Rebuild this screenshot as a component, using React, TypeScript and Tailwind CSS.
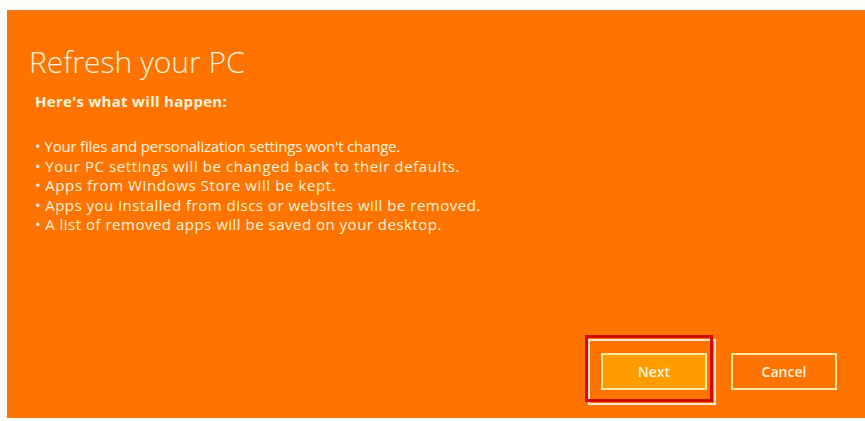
import React from "react";

const bullets = [
  { t: "Your files and personalization settings won't change.", c: "tracking-[-0.2px]" },
  { t: "Your PC settings will be changed back to their defaults.", c: "tracking-[0.6px]" },
  { t: "Apps from Windows Store will be kept.", c: "tracking-[0.6px]" },
  { t: "Apps you installed from discs or websites will be removed.", c: "tracking-[0.5px]" },
  { t: "A list of removed apps will be saved on your desktop.", c: "tracking-[0.5px]" },
];

export default function App() {
  return (
    <div
      className="w-[865px] h-[421px] bg-[#fdfcf8] pl-[7px] pt-[10px] pb-[3px] overflow-hidden"
      style={{ fontFamily: '"Open Sans", "Noto Sans", sans-serif' }}
    >
      <div className="h-full bg-[#ff7300] border-t border-[#e07a2a] flex flex-col text-[#fff3dc]">
        <h1 className="pl-[22px] pt-[33px] text-[30px] leading-[36px] font-light">
          Refresh your PC
        </h1>
        <p className="pl-[28px] mt-[11px] text-[15px] leading-[20px] font-bold tracking-[0.3px]">
          Here's what will happen:
        </p>
        <ul className="pl-[28px] mt-[26px] flex flex-col text-[15px] leading-[19.5px] font-medium">
          {bullets.map((b) => (
            <li key={b.t} className={b.c}>
              <span className="mr-[4px]">•</span>
              {b.t}
            </li>
          ))}
        </ul>
        <div className="mt-auto flex justify-end gap-[24px] pr-[28px] pb-[28px]">
          <div className="relative">
            <div className="absolute left-[-13px] top-[-14px] right-[-9px] bottom-[-15px] border-2 border-[#ffe6c8]" />
            <div className="absolute left-[-16px] top-[-18px] right-[-6px] bottom-[-12px] border-[3px] border-[#d20a0a]" />
            <button className="relative w-[106px] h-[37px] border-2 border-[#ffe9a0] bg-[#ff9c00] text-[14px] font-semibold text-[#fff3dc]">
              Next
            </button>
          </div>
          <button className="w-[106px] h-[37px] border-2 border-[#ffe9a0] bg-[#ff7300] text-[14px] font-semibold text-[#fff3dc]">
            Cancel
          </button>
        </div>
      </div>
    </div>
  );
}
